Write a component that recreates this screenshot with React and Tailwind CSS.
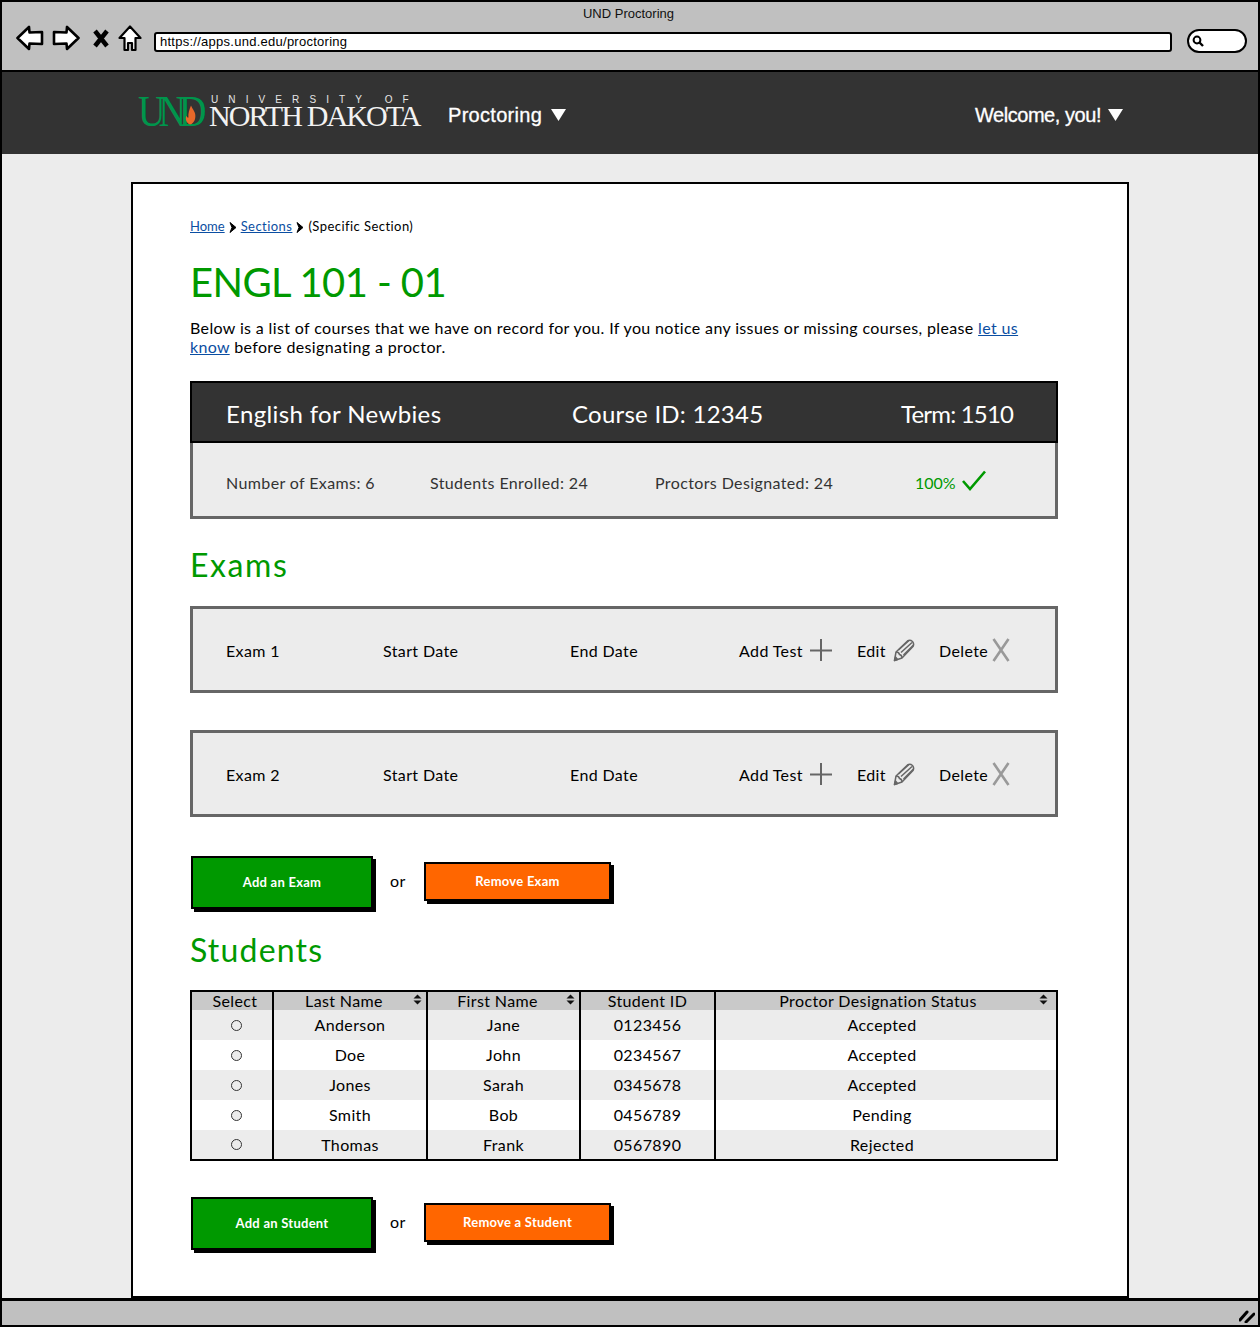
const SKETCH = "font-['Lato','Open_Sans',sans-serif]";

function Tri({ className }) {
  return (
    <svg className={className} width="15" height="12" viewBox="0 0 15 12">
      <polygon points="0,0 15,0 7.5,12" fill="#fff" />
    </svg>
  );
}

function BackIcon({ flip }) {
  return (
    <svg width="28" height="26" viewBox="0 0 28 26" className={flip ? "-scale-x-100" : ""}>
      <path d="M1.5 13 L13 2 L13.5 7.5 L26 7 L26 19 L13.5 18.5 L13 24 Z" fill="#fff" stroke="#000" strokeWidth="2.6" strokeLinejoin="round" />
    </svg>
  );
}

function Chevron() {
  return (
    <svg width="8" height="11" viewBox="0 0 8 11" className="mx-[4px]">
      <path d="M1 0.5 L7 5.5 L1 10.5 L3 5.5 Z" fill="#000" stroke="#000" strokeWidth="1" strokeLinejoin="round" />
    </svg>
  );
}

function Sort() {
  return (
    <svg width="9" height="11" viewBox="0 0 9 11">
      <polygon points="0.5,4.5 8.5,4.5 4.5,0.5" fill="#111" />
      <polygon points="0.5,6.5 8.5,6.5 4.5,10.5" fill="#111" />
    </svg>
  );
}

function ExamRow({ name, className }) {
  return (
    <div className={"flex h-[87px] items-center border-[3px] border-[#666] bg-[#ececec] pl-[33px] pt-[3px] text-[16px] text-black " + className}>
      <span className="w-[157px]">{name}</span>
      <span className="w-[187px]">Start Date</span>
      <span className="w-[169px]">End Date</span>
      <span className="flex w-[118px] items-center">
        <span className="w-[71px]">Add Test</span>
        <svg width="22" height="22" viewBox="0 0 22 22" className="-translate-y-px">
          <path d="M0 11.5 H22 M11 0 V22" stroke="#666" strokeWidth="2" fill="none" />
        </svg>
      </span>
      <span className="flex w-[82px] items-center">
        <span className="w-[36px]">Edit</span>
        <svg width="22" height="23" viewBox="0 0 22 23" fill="none" stroke="#666" strokeWidth="1.5" strokeLinejoin="round" className="-translate-y-px">
          <path d="M1.5 21.5 L3 13 L14.5 2 Q17 0.5 19.5 2.5 Q21.5 5 20 7.5 L9 19 Z" />
          <path d="M3 13 Q6 13 6.5 15.5 Q9 16 9 19 M5.5 11 L16 1.5 M8 13.5 L19 3.5 M10.5 16 L20.5 6" />
          <path d="M1.5 21.5 L4.5 20.5 L2.5 18 Z" fill="#666" />
        </svg>
      </span>
      <span className="flex items-center">
        <span className="w-[53px]">Delete</span>
        <svg width="18" height="24" viewBox="0 0 18 24" className="-translate-y-px">
          <path d="M1.5 1 L16.5 23 M16.5 1 L1.5 23" stroke="#999" strokeWidth="2.6" fill="none" />
        </svg>
      </span>
    </div>
  );
}

function ButtonRow({ add, remove, className }) {
  return (
    <div className={"flex h-[55px] items-center " + className}>
      <button className="ml-px flex h-[53px] w-[182px] items-center justify-center border-2 border-black bg-[#009900] text-[13px] font-bold tracking-[0.25px] text-white shadow-[3px_3px_0_#000]">
        {add}
      </button>
      <span className="ml-[17px] w-[34px] -translate-y-[2px] text-[16px] text-black">or</span>
      <button className="mb-[2px] flex h-[39px] w-[187px] items-center justify-center border-2 border-black bg-[#ff6600] text-[13px] font-bold tracking-[0.25px] text-white shadow-[3px_3px_0_#000]">
        {remove}
      </button>
    </div>
  );
}

const students = [
  ["Anderson", "Jane", "0123456", "Accepted"],
  ["Doe", "John", "0234567", "Accepted"],
  ["Jones", "Sarah", "0345678", "Accepted"],
  ["Smith", "Bob", "0456789", "Pending"],
  ["Thomas", "Frank", "0567890", "Rejected"],
];

function Table() {
  const cols = "grid grid-cols-[80px_154px_153px_135px_1fr]";
  const cell = "flex items-center justify-center border-l-2 border-black";
  return (
    <div className="mt-[20px] h-[171px] border-2 border-black text-[16px] text-black">
      <div className={cols + " h-[18px] bg-[#c9c9c9] leading-[18px]"}>
        <div className="flex items-center justify-center pl-[6px]">Select</div>
        <div className={cell + " relative pr-[12px]"}>
          Last Name
          <span className="absolute right-[4px] top-[2px]"><Sort /></span>
        </div>
        <div className={cell + " relative pr-[12px]"}>
          First Name
          <span className="absolute right-[4px] top-[2px]"><Sort /></span>
        </div>
        <div className={cell}>Student ID</div>
        <div className={cell + " relative pr-[16px]"}>
          Proctor Designation Status
          <span className="absolute right-[8px] top-[2px]"><Sort /></span>
        </div>
      </div>
      {students.map((s, i) => (
        <div key={s[0]} className={cols + (i === 4 ? " h-[29px]" : " h-[30px]") + (i % 2 === 0 ? " bg-[#ececec]" : " bg-white")}>
          <div className="flex items-center justify-center pl-[8px]">
            <span className="size-[11px] rounded-full border border-[#333] bg-[#ececec]" />
          </div>
          <div className={cell}>{s[0]}</div>
          <div className={cell}>{s[1]}</div>
          <div className={cell}>{s[2]}</div>
          <div className={cell + " pr-[8px]"}>{s[3]}</div>
        </div>
      ))}
    </div>
  );
}

export default function App() {
  return (
    <div className={"flex h-[1327px] w-[1260px] flex-col overflow-hidden border-2 border-black bg-[#ececec] tracking-[0.38px] " + SKETCH}>
      {/* browser chrome */}
      <div className="h-[70px] shrink-0 border-b-2 border-black bg-[#c0c0c0] font-['Liberation_Sans',sans-serif] tracking-normal">
        <div className="pr-[3px] pt-[2px] text-center text-[13px] leading-[19px] text-[#111]">UND Proctoring</div>
        <div className="flex items-center pl-[14px]">
          <BackIcon />
          <span className="ml-[8px]"><BackIcon flip /></span>
          <svg width="18" height="19" viewBox="0 0 18 19" className="ml-[12px]">
            <path d="M3 2 L15 17 M15 2 L3 17" stroke="#000" strokeWidth="4.5" fill="none" />
          </svg>
          <svg width="24" height="27" viewBox="0 0 24 27" className="ml-[8px]">
            <path d="M12 1.5 L22.5 13 L17.5 13 L17.5 25 L14 25 L14 18 L10 18 L10 25 L6.5 25 L6.5 13 L1.5 13 Z" fill="#fff" stroke="#000" strokeWidth="2.2" strokeLinejoin="round" />
          </svg>
          <div className="ml-[12px] mt-[8px] flex h-[20px] w-[1018px] items-center rounded-[3px] border-2 border-black bg-white pl-[4px] text-[13px] tracking-[0.26px] text-black">
            https://apps.und.edu/proctoring
          </div>
          <div className="ml-[15px] mt-[6px] flex h-[24px] w-[60px] items-center rounded-full border-2 border-black bg-white pl-[3px]">
            <svg width="12" height="12" viewBox="0 0 12 12">
              <circle cx="5" cy="5" r="3.4" fill="none" stroke="#000" strokeWidth="2" />
              <path d="M7.5 7.5 L11 11" stroke="#000" strokeWidth="2.4" />
            </svg>
          </div>
        </div>
      </div>

      {/* site nav */}
      <div className="flex h-[82px] shrink-0 items-center bg-[#333] pl-[136px] pt-[4px] font-['Liberation_Sans',sans-serif] tracking-normal text-white">
        <div className="relative h-[36px] w-[284px] -translate-y-[2px]">
          <span className="absolute left-0 top-[-2px] origin-top scale-y-[1.18] font-['Liberation_Serif',serif] text-[38px] leading-[30px] tracking-[-7px] text-[#00954c]">UND</span>
          <svg width="12" height="20" viewBox="0 0 14 22" className="absolute left-[47px] top-[10px]">
            <path d="M7 0 C9 5 13 8 12 14 C11.5 19 8 22 6 22 C2 21 0 17 1.5 12 C2.5 14 3.5 14.5 4 14 C3.5 9 5 5 7 0 Z" fill="#e8682a" />
          </svg>
          <span className="absolute left-[73px] top-[2px] whitespace-nowrap text-[10px] leading-[6px] tracking-[10.1px] text-[#e6e6e6]">UNIVERSITY OF</span>
          <span className="absolute left-[71px] top-[11px] whitespace-nowrap font-['Liberation_Serif',serif] text-[30px] leading-[20px] tracking-[-1.9px] text-[#f2f2f2]">NORTH DAKOTA</span>
        </div>
        <span className="ml-[26px] text-[20px] tracking-[0.3px] [-webkit-text-stroke:0.3px_white]">Proctoring</span>
        <Tri className="ml-[9px]" />
        <span className="ml-auto text-[20px] tracking-[-0.45px] [-webkit-text-stroke:0.3px_white]">Welcome, you!</span>
        <Tri className="ml-[7px] mr-[135px]" />
      </div>

      {/* page */}
      <div className="min-h-0 flex-1 pl-[129px] pt-[28px]">
        <div className="h-[1116px] w-[998px] border-2 border-black bg-white pl-[57px] pr-[69px]">
          <div className="mt-[33px] flex h-[20px] items-center text-[13px] tracking-[0.45px] text-black">
            <a className="tracking-normal text-[#0b4ea2] underline">Home</a>
            <Chevron />
            <a className="text-[#0b4ea2] underline">Sections</a>
            <Chevron />
            <span>(Specific Section)</span>
          </div>

          <h1 className="mt-[21px] text-[40px] leading-[48px] tracking-[-0.6px] text-[#009900]">ENGL 101 - 01</h1>

          <p className="mt-[12px] text-[16px] leading-[19px] tracking-[0.36px] text-black">
            Below is a list of courses that we have on record for you. If you notice any issues or missing courses, please{" "}
            <a className="text-[#0b4ea2] underline">let us</a>
            <br />
            <a className="text-[#0b4ea2] underline">know</a> before designating a proctor.
          </p>

          <div className="mt-[25px] h-[138px] border-[3px] border-t-0 border-[#666] bg-[#ececec]">
            <div className="-mx-[3px] flex h-[62px] items-center border-2 border-black bg-[#333] pl-[34px] pt-[4px] text-[24px] text-white">
              <span className="w-[346px] tracking-[0.37px]">English for Newbies</span>
              <span className="w-[329px] tracking-[0.25px]">Course ID: 12345</span>
              <span className="tracking-[-0.8px]">Term: 1510</span>
            </div>
            <div className="flex h-[73px] items-center pl-[33px] pt-[6px] text-[16px] text-[#333]">
              <span className="w-[204px]">Number of Exams: 6</span>
              <span className="w-[225px]">Students Enrolled: 24</span>
              <span className="w-[260px]">Proctors Designated: 24</span>
              <span className="flex items-center text-[#009900]">
                <span className="w-[47px] tracking-normal">100%</span>
                <svg width="24" height="21" viewBox="0 0 24 21" className="-translate-y-[2px]">
                  <path d="M1 11 L8 19 L23 1.5" fill="none" stroke="#009900" strokeWidth="2.6" />
                </svg>
              </span>
            </div>
          </div>

          <h2 className="mt-[26px] h-[40px] text-[32px] leading-[40px] tracking-[1.6px] text-[#009900]">Exams</h2>

          <ExamRow name="Exam 1" className="mt-[21px]" />
          <ExamRow name="Exam 2" className="mt-[37px]" />

          <ButtonRow add="Add an Exam" remove="Remove Exam" className="mt-[38px]" />

          <h2 className="mt-[20px] h-[40px] text-[32px] leading-[40px] tracking-[1.2px] text-[#009900]">Students</h2>

          <Table />

          <ButtonRow add="Add an Student" remove="Remove a Student" className="mt-[35px]" />
        </div>
      </div>

      {/* status bar */}
      <div className="relative h-[27px] shrink-0 border-t-[3px] border-black bg-[#c0c0c0]">
        <svg width="16" height="14" viewBox="0 0 16 14" className="absolute bottom-[2px] right-[3px]">
          <path d="M1 11 L8 3 M7 13 L15 5" stroke="#000" strokeWidth="3" strokeLinecap="round" />
        </svg>
      </div>
    </div>
  );
}
